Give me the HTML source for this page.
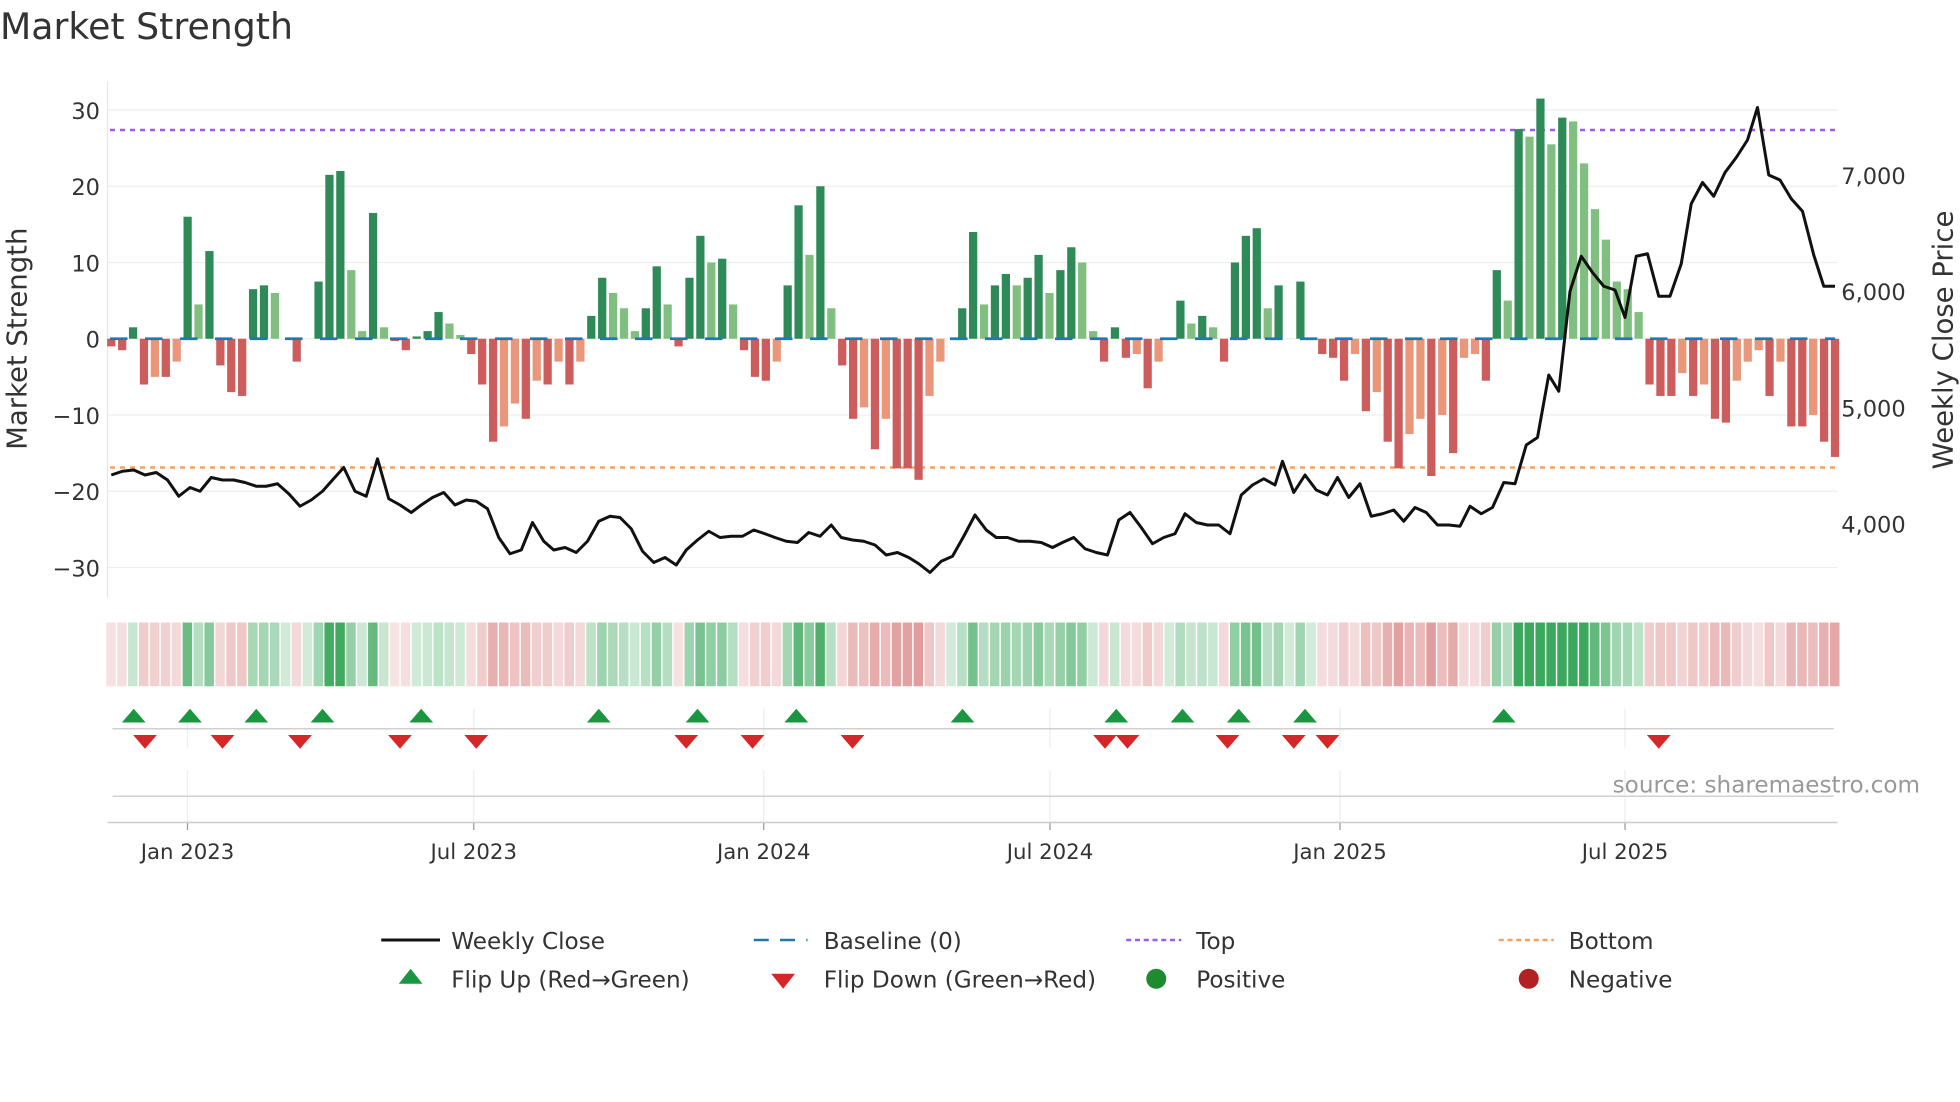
<!DOCTYPE html>
<html><head><meta charset="utf-8"><style>
html,body{margin:0;padding:0;background:#fff;width:1960px;height:1102px;overflow:hidden}
svg text{font-family:"DejaVu Sans","Liberation Sans",sans-serif}
</style></head><body>
<svg id="s" width="1960" height="1102" viewBox="0 0 1568 881.6" xmlns="http://www.w3.org/2000/svg">
<rect width="1568" height="882" fill="#fff"/>
<text x="0" y="31" font-size="29" fill="#333">Market Strength</text>
<g id="grid"></g>
<line x1="86" y1="65" x2="86" y2="478" stroke="#e6e6e6"/>
<line x1="88" y1="104" x2="1470" y2="104" stroke="#9b5de5" stroke-width="2" stroke-dasharray="4,4"/>
<line x1="88" y1="374" x2="1470" y2="374" stroke="#f4a261" stroke-width="2" stroke-dasharray="4,4"/>
<g id="bars"></g>
<g id="base"></g>
<polyline id="price" fill="none" stroke="#111" stroke-width="2.4" stroke-linejoin="round"/>
<g id="strip"></g>
<g id="marks"></g>
<g font-size="18" fill="#333" text-anchor="end">
<text x="80" y="95">30</text><text x="80" y="156">20</text><text x="80" y="217">10</text><text x="80" y="278">0</text>
<text x="80" y="339">−10</text><text x="80" y="400">−20</text><text x="80" y="461">−30</text>
</g>
<g font-size="18" fill="#333">
<text x="1473" y="147">7,000</text><text x="1473" y="240">6,000</text><text x="1473" y="333">5,000</text><text x="1473" y="426">4,000</text>
</g>
<text transform="translate(21,271) rotate(-90)" text-anchor="middle" font-size="22" fill="#333">Market Strength</text>
<text transform="translate(1562,272) rotate(-90)" text-anchor="middle" font-size="22" fill="#333">Weekly Close Price</text>
<line x1="90" y1="583" x2="1467" y2="583" stroke="#d0d0d0" stroke-width="1.2"/>
<line x1="90" y1="637" x2="1467" y2="637" stroke="#d0d0d0" stroke-width="1.2"/>
<line x1="86" y1="658" x2="1470" y2="658" stroke="#ccc" stroke-width="1.2"/>
<text x="1536" y="634" text-anchor="end" font-size="18.5" fill="#999">source: sharemaestro.com</text>
<g id="xt" font-size="17" fill="#333" text-anchor="middle"></g>
<g font-size="18.5" fill="#333">
<line x1="305" y1="752" x2="352" y2="752" stroke="#111" stroke-width="2.4"/><text x="361" y="759">Weekly Close</text>
<line x1="603" y1="752" x2="646" y2="752" stroke="#1f77b4" stroke-width="2" stroke-dasharray="12,9"/><text x="659" y="759">Baseline (0)</text>
<line x1="901" y1="752" x2="945" y2="752" stroke="#9b5de5" stroke-width="2" stroke-dasharray="4,3"/><text x="957" y="759">Top</text>
<line x1="1199" y1="752" x2="1243" y2="752" stroke="#f4a261" stroke-width="2" stroke-dasharray="4,3"/><text x="1255" y="759">Bottom</text>
<polygon points="319,787 338,787 328.5,775" fill="#1a9641"/><text x="361" y="790">Flip Up (Red→Green)</text>
<polygon points="617,779 636,779 626.5,791" fill="#d62728"/><text x="659" y="790">Flip Down (Green→Red)</text>
<circle cx="925" cy="783" r="8" fill="#1e8c2e"/><text x="957" y="790">Positive</text>
<circle cx="1223" cy="783" r="8" fill="#b22222"/><text x="1255" y="790">Negative</text>
</g>
</svg>
<script>
var NS="http://www.w3.org/2000/svg";
function el(p,t,a){var e=document.createElementNS(NS,t);for(var k in a)e.setAttribute(k,a[k]);document.getElementById(p).appendChild(e);return e;}
var V=[-1,-1.5,1.5,-6,-5,-5,-3,16,4.5,11.5,-3.5,-7,-7.5,6.5,7,6,0,-3,0,7.5,21.5,22,9,1,16.5,1.5,-0.3,-1.5,0.3,1,3.5,2,0.5,-2,-6,-13.5,-11.5,-8.5,-10.5,-5.5,-6,-3,-6,-3,3,8,6,4,1,4,9.5,4.5,-1,8,13.5,10,10.5,4.5,-1.5,-5,-5.5,-3,7,17.5,11,20,4,-3.5,-10.5,-9,-14.5,-10.5,-17,-17,-18.5,-7.5,-3,0,4,14,4.5,7,8.5,7,8,11,6,9,12,10,1,-3,1.5,-2.5,-2,-6.5,-3,0,5,2,3,1.5,-3,10,13.5,14.5,4,7,0,7.5,0,-2,-2.5,-5.5,-2,-9.5,-7,-13.5,-17,-12.5,-10.5,-18,-10,-15,-2.5,-2,-5.5,9,5,27.5,26.5,31.5,25.5,29,28.5,23,17,13,7.5,6.5,3.5,-6,-7.5,-7.5,-4.5,-7.5,-6,-10.5,-11,-5.5,-3,-1.5,-7.5,-3,-11.5,-11.5,-10,-13.5,-15.5];
var N=V.length,x0=89,x1=1468,dx=(x1-x0)/(N-1);
for(var v=-30;v<=30;v+=10){var y=271-6.1*v;el("grid","line",{x1:86,x2:1470,y1:y,y2:y,stroke:"#eeeeee","stroke-width":1});}
[150,379,611,840,1072,1300].forEach(function(x){el("grid","line",{x1:x,x2:x,y1:567,y2:598,stroke:"#eee"});el("grid","line",{x1:x,x2:x,y1:616,y2:658,stroke:"#eee"});el("grid","line",{x1:x,x2:x,y1:658,y2:664,stroke:"#999"});});
var L=["Jan 2023","Jul 2023","Jan 2024","Jul 2024","Jan 2025","Jul 2025"];
[150,379,611,840,1072,1300].forEach(function(x,i){var t=el("xt","text",{x:x,y:687});t.textContent=L[i];});
for(var i=0;i<N;i++){var x=x0+i*dx,v=V[i],p=i?V[i-1]:0;var light=Math.abs(v)<Math.abs(p)&&(v*p>0);
var c=v>=0?(light?"#80bf80":"#2e8b57"):(light?"#e9967a":"#cd5c5c");
var y=271-6.1*v;el("bars","rect",{x:x-3.3,width:6.6,y:Math.min(y,271),height:Math.abs(271-y),fill:c});
var a=Math.min(0.95,0.22+Math.abs(v)/22*0.7);
var sc=v>=0?"rgba(49,163,84,"+a+")":"rgba(205,92,92,"+(a*0.75)+")";
el("strip","rect",{x:x-4,width:7.6,y:498,height:51,fill:sc});}
el("base","line",{x1:88,x2:1468,y1:271,y2:271,stroke:"#1f77b4","stroke-width":2.2,"stroke-dasharray":"14,14"});
var P="89,380 98,377 107,376 116,380 125,378 134,384 143,397 152,390 160,393 169,382 178,384 187,384 196,386 205,389 213,389 222,387 231,395 240,405 249,400 258,393 266,384 275,374 284,393 293,397 302,367 311,399 320,404 329,410 337,404 346,398 355,394 364,404 373,400 381,401 390,407 399,430 408,443 417,440 426,418 435,433 443,440 452,438 461,442 470,433 479,417 488,413 496,414 505,423 514,441 523,450 532,446 541,452 549,440 558,432 567,425 576,430 585,429 594,429 603,424 612,427 620,430 629,433 638,434 647,426 656,429 665,420 673,430 682,432 691,433 700,436 709,444 718,442 727,446 735,451 744,458 753,449 762,445 771,429 780,412 789,424 797,430 806,430 815,433 824,433 833,434 842,438 850,434 859,430 868,439 877,442 886,444 895,416 904,410 913,422 922,435 931,430 940,427 948,411 957,418 966,420 975,420 984,427 993,396 1002,388 1011,383 1020,388 1026,369 1035,394 1044,380 1053,392 1062,396 1070,382 1079,398 1088,387 1097,413 1106,411 1115,408 1123,417 1132,406 1141,410 1150,420 1159,420 1168,421 1176,405 1185,411 1194,406 1203,386 1212,387 1221,356 1230,350 1239,300 1247,313 1256,233 1265,205 1274,218 1283,229 1292,232 1300,254 1309,205 1318,203 1327,237 1336,237 1345,211 1353,163 1362,146 1371,157 1380,138 1389,126 1398,112 1406,86 1415,140 1424,144 1433,159 1442,169 1451,204 1459,229 1468,229";
document.getElementById("price").setAttribute("points",P);
[107,152,205,258,337,479,558,637,770,893,946,991,1044,1203].forEach(function(x){el("marks","polygon",{points:(x-9.5)+",578 "+(x+9.5)+",578 "+x+",567",fill:"#1a9641"});});
[116,178,240,320,381,549,602,682,884,902,982,1035,1062,1327].forEach(function(x){el("marks","polygon",{points:(x-9.5)+",588 "+(x+9.5)+",588 "+x+",599",fill:"#d62728"});});
</script>
</body></html>
